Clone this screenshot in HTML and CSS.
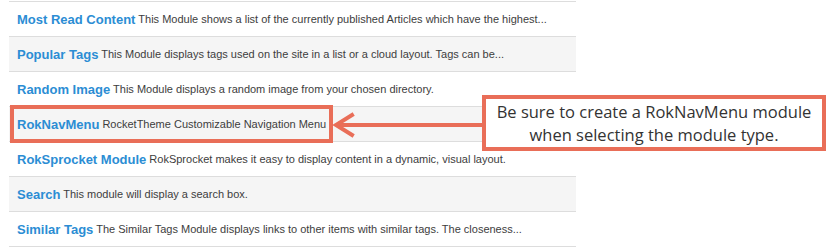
FILE: index.html
```html
<!DOCTYPE html>
<html lang="en">
<head>
    <meta charset="UTF-8">
    <meta name="viewport" content="width=device-width, initial-scale=1.0">
    <title>Module Types</title>
    <link rel="stylesheet" href="styles.css">
</head>
<body>
    <div class="canvas">
        <ul class="modules">
            <li class="module"><a href="#">Most Read Content</a> This Module shows a list of the currently published Articles which have the highest...</li>
            <li class="module"><a href="#">Popular Tags</a> This Module displays tags used on the site in a list or a cloud layout. Tags can be...</li>
            <li class="module"><a href="#">Random Image</a> This Module displays a random image from your chosen directory.</li>
            <li class="module"><a href="#">RokNavMenu</a> RocketTheme Customizable Navigation Menu</li>
            <li class="module"><a href="#">RokSprocket Module</a> RokSprocket makes it easy to display content in a dynamic, visual layout.</li>
            <li class="module"><a href="#">Search</a> This module will display a search box.</li>
            <li class="module"><a href="#">Similar Tags</a> The Similar Tags Module displays links to other items with similar tags. The closeness...</li>
        </ul>

        <!-- annotation overlay -->
        <div class="highlight"></div>
        <svg class="arrow" width="150" height="30" viewBox="0 0 150 30">
            <path d="M4 15 H150" stroke="#e96e58" stroke-width="4" fill="none"/>
            <path d="M20 5 L4 15 L20 25" stroke="#e96e58" stroke-width="4" fill="none" stroke-linecap="square"/>
        </svg>
        <div class="callout">Be sure to create a RokNavMenu module<br>when selecting the module type.</div>
    </div>
</body>
</html>
```

FILE: styles.css
```css
* {
    margin: 0;
    padding: 0;
    box-sizing: border-box;
}

body {
    background: #fff;
    font-family: 'Liberation Sans', Arial, sans-serif;
    color: #3d3d3d;
}

.canvas {
    position: relative;
    width: 837px;
    height: 248px;
    padding: 1px 0 0 9px;
}

.modules {
    list-style: none;
    width: 567px;
    border-top: 1px solid #ddd;
}

.module {
    height: 35px;
    display: flex;
    align-items: center;
    padding-left: 8px;
    border-bottom: 1px solid #ddd;
    font-size: 11px;
    white-space: pre;
}

.module:nth-child(even) {
    background: #f5f5f5;
}

.module a {
    color: #2b8dd4;
    font-weight: bold;
    font-size: 13px;
    text-decoration: none;
}

.highlight {
    position: absolute;
    left: 10px;
    top: 105px;
    width: 323px;
    height: 38px;
    border: 4px solid #e96e58;
}

.arrow {
    position: absolute;
    left: 332px;
    top: 110px;
}

.callout {
    position: absolute;
    left: 482px;
    top: 95px;
    width: 344px;
    height: 56px;
    border: 4px solid #e96e58;
    background: #fff;
    display: flex;
    align-items: center;
    justify-content: center;
    text-align: center;
    font-family: 'Open Sans', sans-serif;
    font-size: 16.5px;
    line-height: 23px;
    color: #333;
}
```
